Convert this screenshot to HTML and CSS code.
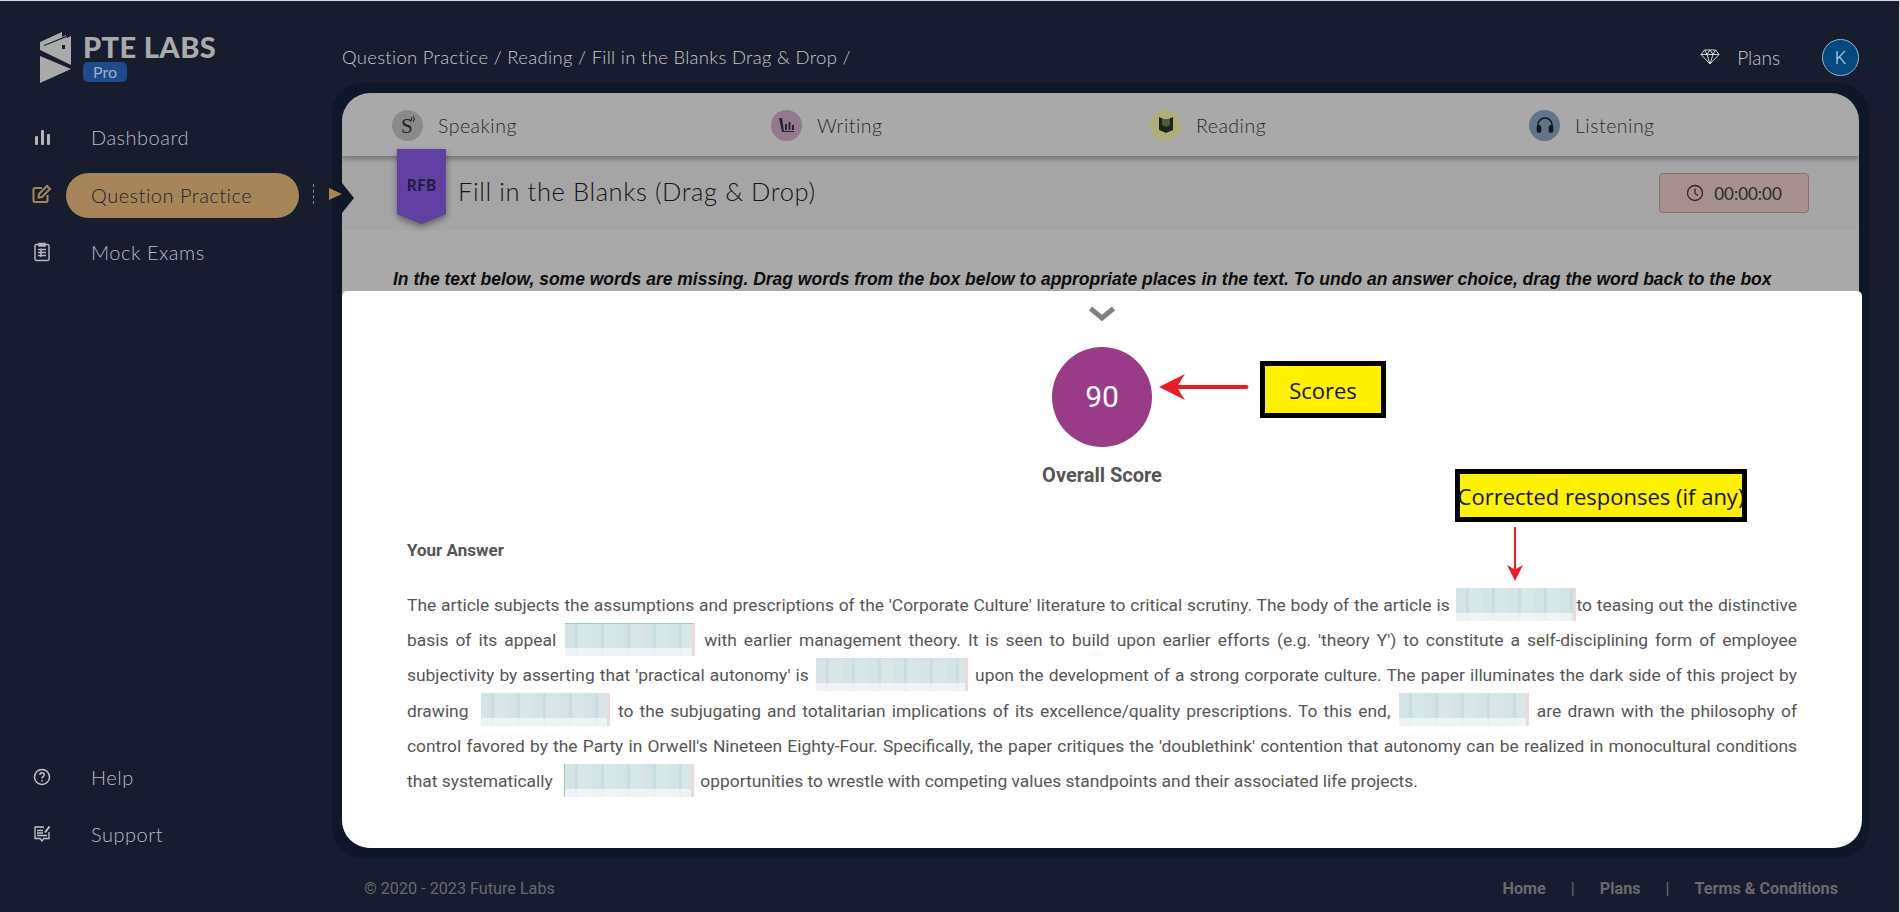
FILE: index.html
```html
<!DOCTYPE html>
<html lang="en">
  <head>
    <meta charset="UTF-8" />
    <meta name="viewport" content="width=device-width, initial-scale=1.0" />
    <title>PTE Labs - Fill in the Blanks</title>
    <link rel="stylesheet" href="styles.css">
  </head>
  <body>
    <aside class="sidebar">
      <div class="logo">
        <svg class="logo-mark" width="32" height="52" viewBox="0 0 32 52">
          <path d="M0 10 L22 0 V5 L26 3 V4 L4 13 V14 L27 5 V6 L31 4 V33 L0 18 Z" fill="#aaa" />
          <path d="M22 13 H25 V17 H22 Z" fill="#181d2e" />
          <path d="M0 24 L31 37 L0 51 Z" fill="#aaa" />
        </svg>
        <div class="logo-text">
          <div class="logo-name">PTE LABS</div>
          <div class="logo-badge">Pro</div>
        </div>
      </div>

      <nav class="nav">
        <div class="nav-item">
          <svg class="nav-icon" width="20" height="20" viewBox="0 0 20 20" fill="#b5b5b5">
            <rect x="3" y="9" width="3" height="9" rx="1" />
            <rect x="9" y="3" width="3" height="15" rx="1" />
            <rect x="15" y="7" width="3" height="11" rx="1" />
          </svg>
          <span class="nav-label">Dashboard</span>
        </div>
        <div class="nav-item nav-item-active">
          <svg class="nav-icon" width="20" height="20" viewBox="0 0 20 20" fill="none" stroke="#a68658" stroke-width="2">
            <path d="M10 4 H3 Q1.500 4 1.500 5.500 V16.500 Q1.500 18 3 18 H14 Q15.500 18 15.500 16.500 V11" />
            <path d="M7 10 L15 2 L18 5 L10 13 L6.500 13.500 Z" />
          </svg>
          <span class="nav-label">Question Practice</span>
          <span class="nav-dash"></span>
          <span class="nav-arrow"></span>
        </div>
        <div class="nav-item">
          <svg class="nav-icon" width="20" height="20" viewBox="0 0 20 20" fill="none" stroke="#b5b5b5" stroke-width="1.500">
            <rect x="3" y="2.500" width="14" height="16" rx="1.500" />
            <path d="M7 1.500 H13 V4 H7 Z" fill="#b5b5b5" />
            <path d="M6 7.500 H14 M6 10.500 H14 M6 13.500 H14 M9 6.500 V15" />
          </svg>
          <span class="nav-label">Mock Exams</span>
        </div>
      </nav>

      <nav class="nav nav-bottom">
        <div class="nav-item">
          <svg class="nav-icon" width="20" height="20" viewBox="0 0 20 20" fill="none" stroke="#c4c4c4" stroke-width="1.500">
            <circle cx="10" cy="10" r="7.500" />
            <path d="M7.800 8 Q8 5.800 10 5.800 Q12.200 5.800 12.200 7.800 Q12.200 9 10.800 9.800 Q10 10.300 10 11.500" />
            <path d="M10 13 V14.500" />
          </svg>
          <span class="nav-label">Help</span>
        </div>
        <div class="nav-item">
          <svg class="nav-icon" width="20" height="20" viewBox="0 0 20 20" fill="none" stroke="#c4c4c4" stroke-width="1.300">
            <path d="M12 3 H3 V14.500 H8 L10 17 L12 14.500 H17 V8" />
            <path d="M5 6.500 H11 M5 9 H11 M5 11.500 H15" />
            <path d="M13 8.500 L17.500 2.500" stroke-width="2" />
          </svg>
          <span class="nav-label">Support</span>
        </div>
      </nav>
    </aside>

    <div class="main">
      <header class="topbar">
        <div class="breadcrumb">Question Practice / Reading / Fill in the Blanks Drag &amp; Drop /</div>
        <div class="plans">
          <svg width="20" height="16" viewBox="0 0 20 16" fill="none" stroke="#d5d5d5" stroke-width="1">
            <path d="M4.500 1 H15.500 L19 5.500 L10 15 L1 5.500 Z" />
            <path d="M1 5.500 H19 M7 5.500 L10 15 L13 5.500 M4.500 1 L7 5.500 L10 1 L13 5.500 L15.500 1" />
          </svg>
          <span>Plans</span>
        </div>
        <div class="avatar">K</div>
      </header>

      <div class="frame">
        <div class="panel">
          <div class="tabs">
            <div class="tab">
              <span class="tab-icon tab-icon-speaking">
                <svg width="22" height="24" viewBox="0 0 22 24" fill="none" stroke="#22242c" stroke-width="1">
                  <text class="tab-s" x="4" y="20">S</text>
                  <path d="M14 4 Q16 6 14 8 M16 3 Q19 6 16 9" />
                </svg>
              </span>
              Speaking
            </div>
            <div class="tab">
              <span class="tab-icon tab-icon-writing">
                <svg width="18" height="16" viewBox="0 0 18 16" fill="#2b2230">
                  <path d="M1 1 L4 1 L6 14 L16 14 L16 15 L4 15 Z" />
                  <rect x="7" y="7" width="2" height="6" />
                  <rect x="10.500" y="5" width="2" height="8" />
                  <rect x="14" y="8" width="2" height="5" />
                </svg>
              </span>
              Writing
            </div>
            <div class="tab">
              <span class="tab-icon tab-icon-reading">
                <svg width="16" height="18" viewBox="0 0 16 18" fill="#1c2420">
                  <path d="M1 1 L8 4 L15 1 V14 L8 17 L1 14 Z" />
                  <path d="M4 3 H12 V9 L8 11 L4 9 Z" fill="#515a3c" />
                </svg>
              </span>
              Reading
            </div>
            <div class="tab">
              <span class="tab-icon tab-icon-listening">
                <svg width="20" height="20" viewBox="0 0 20 20" fill="none" stroke="#10181f" stroke-width="1.600">
                  <path d="M3 13 V10 A7 7 0 0 1 17 10 V13" />
                  <rect x="2.500" y="11" width="3" height="6" rx="1" fill="#10181f" />
                  <rect x="14.500" y="11" width="3" height="6" rx="1" fill="#10181f" />
                </svg>
              </span>
              Listening
            </div>
          </div>

          <div class="title-row">
            <div class="ribbon"><span class="ribbon-text">RFB</span></div>
            <h1 class="title">Fill in the Blanks (Drag &amp; Drop)</h1>
            <div class="timer">
              <svg width="18" height="18" viewBox="0 0 18 18" fill="none" stroke="#2a2a2a" stroke-width="1.300">
                <circle cx="9" cy="9" r="7.500" />
                <path d="M9 4.500 V9.500 L12 11.500" />
              </svg>
              00:00:00
            </div>
          </div>

          <p class="instruction">In the text below, some words are missing. Drag words from the box below to appropriate places in the text. To undo an answer choice, drag the word back to the box</p>
        </div>

        <div class="sheet">
          <svg class="chevron" width="26" height="14" viewBox="0 0 26 14" fill="none" stroke="#808080" stroke-width="5">
            <path d="M1.500 1.500 L13 11 L24.500 1.500" />
          </svg>
          <div class="score-circle">90</div>
          <div class="score-label">Overall Score</div>
          <div class="answer-title">Your Answer</div>
          <div class="answer">
            <div class="answer-line">The article subjects the assumptions and prescriptions of the 'Corporate Culture' literature to critical scrutiny. The body of the article is <span class="blank blank-120"></span>to teasing out the distinctive</div>
            <div class="answer-line">basis of its appeal <span class="blank blank-130 blank-green-top"></span> with earlier management theory. It is seen to build upon earlier efforts (e.g. 'theory Y') to constitute a self-disciplining form of employee</div>
            <div class="answer-line">subjectivity by asserting that 'practical autonomy' is <span class="blank blank-152"></span> upon the development of a strong corporate culture. The paper illuminates the dark side of this project by</div>
            <div class="answer-line">drawing <span class="blank blank-129"></span> to the subjugating and totalitarian implications of its excellence/quality prescriptions. To this end, <span class="blank blank-130"></span> are drawn with the philosophy of</div>
            <div class="answer-line">control favored by the Party in Orwell's Nineteen Eighty-Four. Specifically, the paper critiques the 'doublethink' contention that autonomy can be realized in monocultural conditions</div>
            <div class="answer-line answer-line-last">that systematically <span class="blank blank-130 blank-green-left"></span> opportunities to wrestle with competing values standpoints and their associated life projects.</div>
          </div>

          <!-- annotations drawn on top of the screenshot -->
          <div class="note note-scores">Scores</div>
          <svg class="arrow-left" width="92" height="26" viewBox="0 0 92 26">
            <path d="M0 13 L26 0 L19 11 H88 Q91 13 88 15 H19 L26 26 Z" fill="#ed1c24" />
          </svg>
          <div class="note note-corrected">Corrected responses (if any)</div>
          <svg class="arrow-down" width="16" height="54" viewBox="0 0 16 54">
            <path d="M7 0 H9 V42 L16 38 L8 54 L0 38 L7 42 Z" fill="#ed1c24" />
          </svg>
        </div>
      </div>

      <footer class="footer">
        <div class="copyright">© 2020 - 2023 Future Labs</div>
        <div class="footer-links">
          <span>Home</span>
          <span class="footer-sep">|</span>
          <span>Plans</span>
          <span class="footer-sep">|</span>
          <span>Terms &amp; Conditions</span>
        </div>
      </footer>
    </div>
  </body>
</html>
```

FILE: styles.css
```css
* {
  box-sizing: border-box;
}
html,
body {
  height: 100%;
}
body {
  margin: 0;
  display: flex;
  height: 912px;
  overflow: hidden;
  background: #181d2e;
  border-top: 1px solid #d8d8d8;
  border-right: 1px solid #d8d8d8;
  font-family: "Roboto", "Liberation Sans", sans-serif;
}

/* sidebar */
.sidebar {
  width: 332px;
  flex: none;
  display: flex;
  flex-direction: column;
  padding: 31px 0 49px 32px;
  font-family: "Lato", "Open Sans", sans-serif;
}
.logo {
  display: flex;
  gap: 11px;
  padding-left: 8px;
  height: 76px;
}
.logo-name {
  height: 30px;
  line-height: 30px;
  font-family: "Lato", sans-serif;
  font-size: 29px;
  font-weight: 900;
  letter-spacing: 0.400px;
  color: #aaa;
  white-space: nowrap;
}
.logo-badge {
  width: 44px;
  height: 20px;
  line-height: 20px;
  text-align: center;
  background: #1e4b8c;
  border-radius: 5px;
  font-size: 16px;
  color: #9fb0c8;
}
.nav-bottom {
  margin-top: auto;
}
.nav-item {
  position: relative;
  display: flex;
  align-items: center;
  height: 57.500px;
  color: #b9bcc4;
  font-size: 20px;
  font-weight: 300;
  letter-spacing: 0.500px;
}
.nav-icon {
  flex: none;
  margin-right: 39px;
}
.nav-item-active {
  z-index: 5;
  color: #1f2230;
}
.nav-item-active .nav-label {
  flex: none;
  width: 233px;
  height: 45px;
  line-height: 44px;
  margin: 2px 0 0 -25px;
  padding-left: 25px;
  background: #a68658;
  border-radius: 23px;
  white-space: nowrap;
}
.nav-dash {
  flex: none;
  height: 20px;
  margin-left: 14px;
  border-left: 1px dashed #a68658;
}
.nav-arrow {
  flex: none;
  width: 0;
  height: 0;
  margin-left: 15px;
  border-left: 13px solid #a68658;
  border-top: 6px solid transparent;
  border-bottom: 6px solid transparent;
}

/* top bar */
.main {
  width: 1537px;
  flex: none;
  display: flex;
  flex-direction: column;
}
.topbar {
  height: 82px;
  flex: none;
  display: flex;
  align-items: center;
  padding: 30px 10px 0 10px;
  font-family: "Lato", "Open Sans", sans-serif;
  font-weight: 300;
  color: #c9c9c9;
}
.breadcrumb {
  flex: 1;
  font-size: 18.500px;
  letter-spacing: 0.300px;
}
.plans {
  display: flex;
  align-items: center;
  gap: 17px;
  font-size: 19px;
  margin-right: 42px;
}
.avatar {
  width: 37px;
  height: 37px;
  line-height: 35px;
  text-align: center;
  background: #004a80;
  border: 1px solid #9ab4c8;
  border-radius: 50%;
  color: #c8d4de;
  font-size: 18px;
  font-family: "Roboto", sans-serif;
}

/* framed content */
.frame {
  position: relative;
  height: 775px;
  flex: none;
  padding: 10px;
  background: #0f1829;
  border-radius: 30px;
}
.frame::before {
  content: "";
  position: absolute;
  left: 10px;
  top: 100px;
  z-index: 3;
  border-left: 12px solid #0f1829;
  border-top: 15px solid transparent;
  border-bottom: 15px solid transparent;
}
.panel {
  height: 100%;
  background: #a9a9a9;
  border-radius: 28px;
  overflow: hidden;
  color: #1a1a1a;
}
.tabs {
  position: relative;
  height: 63px;
  display: grid;
  grid-template-columns: repeat(4, 379px);
  padding-left: 50px;
  box-shadow: 0 3px 5px rgba(0, 0, 0, 0.3);
  z-index: 1;
}
.tab {
  display: flex;
  align-items: center;
  gap: 15px;
  padding-top: 1px;
  font-family: "Lato", "Open Sans", sans-serif;
  font-size: 19.500px;
  font-weight: 300;
  letter-spacing: 0.500px;
  color: #2a2a2a;
}
.tab-icon {
  width: 31px;
  height: 31px;
  flex: none;
  display: flex;
  align-items: center;
  justify-content: center;
  border-radius: 50%;
}
.tab-icon-speaking {
  background: #8a8a8a;
}
.tab-s {
  font-family: "Liberation Serif", serif;
  font-size: 21px;
  fill: #22242c;
  stroke: none;
}
.tab-icon-writing {
  background: #94788d;
}
.tab-icon-reading {
  background: #b0ae78;
}
.tab-icon-listening {
  background: #627489;
}
.title-row {
  position: relative;
  height: 74px;
  display: flex;
  align-items: center;
  padding: 0 50px 0 116px;
  background: #a5a5a5;
}
.ribbon {
  position: absolute;
  left: 55px;
  top: -7px;
  z-index: 2;
  width: 49px;
  height: 75px;
  text-align: center;
  filter: drop-shadow(0 3px 3px rgba(0, 0, 0, 0.4));
}
.ribbon::before {
  content: "";
  position: absolute;
  left: 0;
  top: 0;
  width: 100%;
  height: 100%;
  background: #6040a0;
  clip-path: polygon(0 0, 100% 0, 100% 87%, 50% 100%, 0 87%);
}
.ribbon-text {
  position: relative;
  display: block;
  padding-top: 25px;
  font-family: "Open Sans", sans-serif;
  font-size: 16px;
  font-weight: 700;
  color: #231f44;
}
.title {
  flex: 1;
  margin: 0 0 5px 0;
  font-family: "Lato", "Open Sans", sans-serif;
  font-size: 25.500px;
  font-weight: 300;
  letter-spacing: 0.600px;
  color: #141414;
}
.timer {
  width: 150px;
  height: 40px;
  display: flex;
  align-items: center;
  justify-content: center;
  gap: 10px;
  background: #a59090;
  border: 1px solid #8f6b6b;
  border-radius: 4px;
  font-family: "Lato", sans-serif;
  font-size: 17px;
  font-weight: 400;
  color: #2a2a2a;
}
.instruction {
  margin: 39px 0 0 51px;
  width: 1450px;
  line-height: 20px;
  font-family: "Liberation Sans", sans-serif;
  font-size: 17.500px;
  font-weight: 700;
  font-style: italic;
  color: #0d0d0d;
  white-space: nowrap;
}

.sheet {
  position: absolute;
  left: 10px;
  right: 7px;
  top: 208px;
  bottom: 10px;
  z-index: 4;
  display: flex;
  flex-direction: column;
  align-items: center;
  padding: 0 65px;
  background: #fff;
  border-radius: 5px 5px 28px 28px;
}
.chevron {
  margin-top: 16px;
  flex: none;
}
.score-circle {
  width: 100px;
  height: 100px;
  flex: none;
  margin-top: 26px;
  line-height: 100px;
  text-align: center;
  background: #993b87;
  border-radius: 50%;
  color: #fff;
  font-size: 30px;
}
.score-label {
  margin-top: 16px;
  font-size: 20px;
  font-weight: 700;
  color: #555;
}
.answer-title {
  align-self: flex-start;
  margin-top: 53px;
  font-size: 17px;
  font-weight: 700;
  color: #555;
}
.answer {
  margin-top: 28px;
  align-self: stretch;
  font-size: 17.400px;
  color: #555;
}
.answer-line {
  height: 35.200px;
  line-height: 35.200px;
  text-align: justify;
  text-align-last: justify;
  white-space: nowrap;
}
.answer-line-last {
  text-align-last: left;
}
.blank {
  display: inline-block;
  height: 33px;
  vertical-align: middle;
  margin: -4px 2px 0 2px;
  border-right: 3px solid #ecdada;
  filter: blur(0.6px);
  background:
    linear-gradient(to bottom, rgba(255, 255, 255, 0) 76%, rgba(255, 255, 255, 0.6) 76%),
    repeating-linear-gradient(to right, #d3e3e6 0, #d3e3e6 10px, #c7dde0 10px, #c7dde0 13px, #d8e6e8 13px, #d8e6e8 26px);
}
.blank-120 {
  width: 120px;
  margin-right: 0;
}
.blank-129 {
  width: 129px;
  margin-left: 6px;
}
.blank-130 {
  width: 130px;
}
.blank-152 {
  width: 152px;
}
.blank-green-top {
  border-top: 1px solid #9fc9a6;
}
.blank-green-left {
  margin-left: 7px;
  border-left: 1px solid #9fc9a6;
}

/* yellow notes */
.note {
  position: absolute;
  display: flex;
  align-items: center;
  justify-content: center;
  background: #fff200;
  border: 5px solid #000;
  font-family: "Open Sans", "Noto Sans", sans-serif;
  font-size: 22px;
  color: #111;
  white-space: nowrap;
}
.note-scores {
  left: 918px;
  top: 70px;
  width: 126px;
  height: 57px;
}
.note-corrected {
  left: 1113px;
  top: 178px;
  width: 292px;
  height: 53px;
}
.arrow-left {
  position: absolute;
  left: 817px;
  top: 83px;
}
.arrow-down {
  position: absolute;
  left: 1165px;
  top: 236px;
}

/* footer */
.footer {
  flex: 1;
  display: flex;
  align-items: center;
  justify-content: space-between;
  padding: 7px 31px 0 32px;
  font-size: 16.200px;
  color: #6a6a6a;
}
.footer-links {
  display: flex;
  gap: 25px;
  font-weight: 700;
}
.footer-sep {
  font-weight: 400;
}
```
